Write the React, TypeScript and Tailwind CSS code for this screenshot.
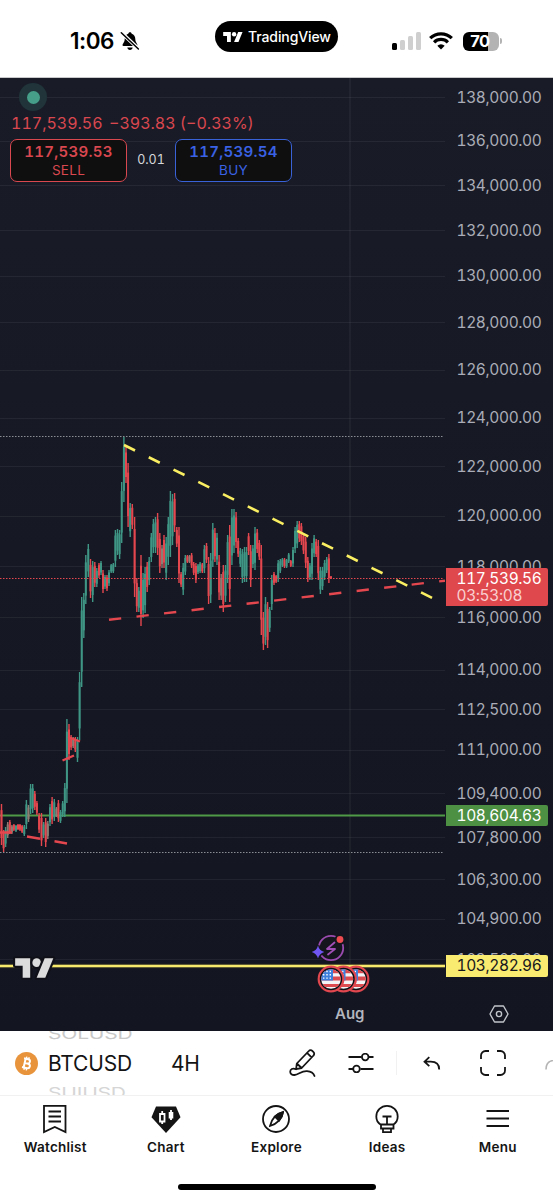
import type { ReactNode } from 'react';

const CHART_TOP = 78;
const GREEN = '#3f9685';
const RED = '#e5474f';

// log price scale
const priceToY = (price: number) => 97 - CHART_TOP + Math.log(138000 / price) * 2997;
const format = (n: number) => n.toLocaleString('en-US', { minimumFractionDigits: 2 });

const ticks = [
  138000, 136000, 134000, 132000, 130000, 128000, 126000, 124000, 122000, 120000, 118000, 116000,
  114000, 112500, 111000, 109400, 107800, 106300, 104900, 103500,
];

type Candle = [x: number, high: number, low: number, side: 'g' | 'r' | 'm'];

const candles: Candle[] = [
  [1.5, 804, 845, 'r'], [3.6, 830, 852, 'r'], [5.6, 827, 847, 'g'], [7.7, 822, 838, 'm'], [9.8, 820, 834, 'r'],
  [11.9, 825, 834, 'm'], [13.9, 824, 831, 'r'], [16, 825, 832, 'g'], [18, 824, 830, 'r'], [20, 824, 831, 'r'],
  [22.1, 825, 833, 'r'], [24.3, 825, 836, 'g'], [26.4, 800, 829, 'g'], [28.5, 805, 822, 'm'], [30.6, 784, 814, 'g'],
  [32.7, 784, 813, 'g'], [34.8, 791, 810, 'r'], [36.9, 801, 815, 'r'], [39.1, 813, 833, 'r'], [41.5, 813, 846, 'r'],
  [43.6, 822, 838, 'g'], [45.7, 818, 847, 'r'], [47.8, 821, 839, 'm'], [50, 804, 826, 'g'], [52.1, 797, 824, 'r'],
  [54.3, 799, 821, 'g'], [56.4, 807, 817, 'm'], [58.4, 800, 822, 'r'], [60.5, 810, 823, 'g'], [62.7, 801, 817, 'g'],
  [64.8, 783, 817, 'g'], [66.9, 719, 803, 'g'], [69, 724, 760, 'r'], [71.1, 735, 750, 'r'], [73.2, 737, 748, 'm'],
  [75.3, 737, 752, 'r'], [77.5, 737, 762, 'g'], [79.6, 672, 740, 'g'], [81.7, 597, 687, 'g'], [83.8, 593, 638, 'g'],
  [85.8, 555, 604, 'g'], [88.3, 544, 577, 'g'], [90.5, 559, 598, 'r'], [92.7, 561, 602, 'g'], [94.8, 562, 587, 'r'],
  [96.8, 568, 587, 'g'], [99, 563, 578, 'r'], [101, 561, 575, 'g'], [103, 570, 593, 'r'], [105, 575, 589, 'g'],
  [107, 575, 591, 'r'], [109, 570, 586, 'g'], [111.2, 564, 573, 'g'], [113.3, 563, 573, 'g'], [115.4, 530, 567, 'g'],
  [117.5, 529, 555, 'g'], [119.6, 530, 559, 'g'], [121.7, 482, 543, 'g'], [123.9, 437, 502, 'g'], [126, 447, 483, 'r'],
  [128.1, 463, 527, 'r'], [130.2, 503, 537, 'g'], [132.3, 504, 529, 'r'], [134.6, 517, 597, 'r'], [136.8, 578, 612, 'r'],
  [138.8, 587, 612, 'g'], [141, 555, 626, 'r'], [143.1, 573, 618, 'g'], [145.1, 567, 613, 'g'], [147.2, 562, 592, 'r'],
  [149.2, 557, 585, 'g'], [151.3, 533, 562, 'g'], [153.4, 519, 553, 'g'], [155.5, 517, 553, 'g'], [157.6, 513, 555, 'r'],
  [159.8, 533, 573, 'r'], [162, 545, 568, 'm'], [164, 535, 568, 'r'], [166.2, 537, 580, 'g'], [168.3, 517, 565, 'g'],
  [170.4, 491, 557, 'g'], [172.5, 494, 545, 'g'], [174.6, 493, 532, 'r'], [176.8, 527, 547, 'r'], [179, 527, 583, 'r'],
  [181.1, 572, 587, 'r'], [183.2, 563, 595, 'g'], [185.3, 555, 575, 'g'], [187.4, 555, 563, 'r'], [189.5, 555, 563, 'm'],
  [191.6, 553, 568, 'r'], [193.7, 562, 575, 'r'], [195.9, 563, 583, 'r'], [198, 564, 574, 'g'], [200.1, 562, 573, 'g'],
  [202.3, 563, 573, 'r'], [204.4, 545, 573, 'g'], [206.5, 543, 563, 'r'], [208.6, 557, 604, 'r'], [210.7, 553, 603, 'g'],
  [212.8, 523, 567, 'g'], [214.9, 528, 562, 'r'], [217, 533, 565, 'g'], [219.1, 555, 600, 'r'], [221.2, 574, 600, 'm'],
  [223.3, 565, 612, 'r'], [225.5, 565, 602, 'g'], [227.6, 535, 583, 'g'], [229.7, 525, 602, 'r'], [231.9, 509, 565, 'g'],
  [234, 509, 553, 'g'], [236.1, 512, 548, 'r'], [238.2, 538, 557, 'r'], [240.3, 548, 567, 'g'], [242.4, 549, 583, 'g'],
  [244.5, 547, 582, 'g'], [246.5, 547, 582, 'g'], [248.6, 533, 555, 'r'], [250.7, 545, 587, 'r'], [252.9, 545, 568, 'g'],
  [255, 527, 570, 'g'], [257.2, 529, 553, 'r'], [259.3, 540, 560, 'r'], [261.3, 545, 635, 'r'], [263.4, 612, 650, 'r'],
  [265.5, 597, 645, 'g'], [267.6, 602, 648, 'r'], [269.7, 607, 632, 'g'], [271.8, 575, 610, 'g'], [274, 572, 585, 'r'],
  [276.1, 575, 583, 'r'], [278.2, 560, 582, 'g'], [280.3, 559, 573, 'g'], [282.4, 558, 567, 'g'], [284.5, 558, 568, 'r'],
  [286.6, 559, 568, 'g'], [288.7, 553, 563, 'g'], [290.8, 560, 567, 'r'], [293, 547, 567, 'g'], [295.1, 527, 553, 'g'],
  [297.2, 521, 548, 'g'], [299.3, 521, 542, 'r'], [301.4, 523, 545, 'r'], [303.5, 533, 554, 'r'], [305.7, 537, 568, 'r'],
  [307.8, 557, 582, 'r'], [309.9, 563, 580, 'g'], [312, 543, 580, 'g'], [314.1, 535, 557, 'g'], [316.2, 539, 557, 'r'],
  [318.3, 540, 580, 'r'], [320.4, 567, 594, 'g'], [322.5, 567, 590, 'g'], [324.6, 560, 580, 'g'], [326.7, 557, 573, 'g'],
  [328.9, 554, 583, 'r'], [331, 576, 579, 'r'],
];

const candleColor = { g: GREEN, r: RED, m: '#8f7d74' };

function TvMark({ className, outline }: { className: string; outline?: boolean }) {
  return (
    <svg viewBox="-2 2 40 22" className={className} fill="currentColor">
      <g
        stroke={outline ? '#101118' : 'none'}
        strokeWidth={outline ? 4 : 0}
        paintOrder="stroke"
        strokeLinejoin="round"
      >
        <path d="M14 22H7V11H0V4h14v18z" />
        <circle cx="20" cy="8" r="4" />
        <path d="M28 22h-8l7.5-18h8L28 22z" />
      </g>
    </svg>
  );
}

function StatusBar() {
  return (
    <header className="flex h-[78px] shrink-0 items-start border-b border-[#c9c9cc] bg-white text-black">
      <div className="flex h-[82px] w-[215px] items-center pl-[70px]">
        <span className="w-[46px] text-[22.5px] font-semibold tracking-[-0.5px]">1:06</span>
        <svg viewBox="0 0 20 20" className="ml-[4px] h-5 w-5">
          <path d="M10 1.2c1 0 1.6.6 1.7 1.5 2.3.7 3.6 2.6 3.6 5.2 0 3.5 2.2 4.6 2.2 6.3 0 .5-.4.8-1 .8h-13c-.6 0-1-.3-1-.8 0-1.7 2.2-2.8 2.2-6.3 0-2.6 1.3-4.500 3.600-5.200C8.400 1.800 9 1.200 10 1.200zM7.300 16.600h5.400c-.2 1.400-1.300 2.300-2.700 2.300s-2.500-.9-2.700-2.300z" />
          <path d="M2.2 2.4 18.700 18" stroke="#fff" strokeWidth="3.6" />
          <path d="M1.3 1.8 18.400 18" stroke="#000" strokeWidth="1.5" strokeLinecap="round" />
        </svg>
      </div>
      <div className="mt-[21px] flex h-[31px] w-[123px] items-center rounded-full bg-black pl-[7px] text-white">
        <TvMark className="h-[12px] w-[22px]" />
        <span className="ml-[4px] text-[14px] font-medium tracking-[-0.1px]">TradingView</span>
      </div>
      <div className="ml-[54px] flex h-[82px] items-center">
        <div className="flex h-[18px] items-end gap-[3px]">
          <span className="h-[7px] w-[5px] rounded-[1.5px] bg-black" />
          <span className="h-[10px] w-[5px] rounded-[1.5px] bg-[#cfcfcf]" />
          <span className="h-[14px] w-[5px] rounded-[1.5px] bg-[#cfcfcf]" />
          <span className="h-[18px] w-[5px] rounded-[1.5px] bg-[#cfcfcf]" />
        </div>
        <svg viewBox="0 0 24 18" className="ml-[8px] h-[18px] w-6">
          <g fill="none" stroke="#000" strokeWidth="3.2">
            <path d="M1.2 6.2a15.400 15.400 0 0 1 21.600 0" />
            <path d="M5.1 10.300a9.800 9.800 0 0 1 13.800 0" />
          </g>
          <path d="M12 17.5 8.300 13.700a5.300 5.300 0 0 1 7.400 0z" />
        </svg>
        <div className="ml-[10px] flex h-[19px] w-[36px] items-center justify-center rounded-[6px] bg-linear-to-r from-black from-70% to-[#b3b3b3] to-70%">
          <span className="-translate-x-px text-[16.5px] leading-none font-bold tracking-[-0.5px] text-white">70</span>
        </div>
        <span className="ml-[1px] h-[6px] w-[2px] rounded-r-full bg-[#b3b3b3]" />
      </div>
    </header>
  );
}

function ChartCanvas() {
  return (
    <svg width="445" height="953" viewBox="0 0 445 953" className="block">
      <g stroke="#ffffff" strokeOpacity="0.06">
        {ticks.map((t) => (
          <path key={t} d={`M0 ${Math.round(priceToY(t)) + 0.5}H445`} />
        ))}
        <path d="M350 0V909" strokeOpacity="0.08" />
      </g>
      <g transform={`translate(0 ${-CHART_TOP})`} fill="none">
        <path d="M0 436.5H443M0 852.5H443" stroke="#8b8d95" strokeDasharray="1.5 1.5" />
        <path d="M0 815.5H445" stroke="#4f9a47" strokeWidth="2.2" />
        <path d="M0 966H445" stroke="#2b2a20" strokeWidth="4.5" />
        <path d="M0 966H445" stroke="#f7e96b" strokeWidth="2.4" />
        {candles.map(([x, high, low, side]) => {
          const range = low - high;
          return (
            <g key={x} stroke={candleColor[side]}>
              <path d={`M${x} ${high}V${low}`} strokeWidth="1.4" />
              <path d={`M${x} ${high + range * 0.15}V${low - range * 0.17}`} strokeWidth="2" />
            </g>
          );
        })}
        <path d="M0 578.5H443" stroke={RED} strokeDasharray="1.5 1.5" />
        <g stroke={RED} strokeWidth="2.4">
          <path d="M109 619.8 445 580.7" strokeDasharray="12.3 15.4" />
          <path d="M62.5 760.5 74 755.5M68 737l12 4.5" />
          <path d="M0 832.5h12M27 836.5l13 2.200M54.5 841.3l12.500 2.200" />
        </g>
        <path d="M124 445 433 598.3" stroke="#faee62" strokeWidth="2.6" strokeDasharray="12.3 15.33" />
      </g>
    </svg>
  );
}

function PriceTag({ y, className, children }: { y: number; className: string; children: ReactNode }) {
  return (
    <div
      className={`absolute left-[1px] w-[102px] rounded-r-[2px] pl-[10.5px] leading-none ${className}`}
      style={{ top: y }}
    >
      {children}
    </div>
  );
}

function PriceAxis() {
  return (
    <div className="relative h-full w-[108px] text-[15.5px] tracking-[-0.38px] text-[#aaadb7] tabular-nums">
      {ticks.map((t) => (
        <span
          key={t}
          className="absolute left-[11.5px] -translate-y-1/2 leading-none"
          style={{ top: priceToY(t) + 0.5 }}
        >
          {format(t)}
        </span>
      ))}
      <PriceTag y={490} className="flex h-[38px] flex-col justify-center gap-[2px] bg-[#df484c] text-white">
        <span>{format(117539.56)}</span>
        <span className="text-[#f9cfd0]">03:53:08</span>
      </PriceTag>
      <PriceTag y={727} className="flex h-[21px] items-center bg-[#4d8f43] text-white">
        {format(108604.63)}
      </PriceTag>
      <PriceTag y={877} className="flex h-[22px] items-center bg-[#f9ea70] text-[#15161c]">
        {format(103282.96)}
      </PriceTag>
      <svg
        viewBox="0 0 20 18"
        className="absolute top-[927px] left-[44px] h-[18px] w-5"
        fill="none"
        stroke="#c3c5cc"
        strokeWidth="1.4"
      >
        <path d="M5.5 1h9L19 9l-4.500 8h-9L1 9z" strokeLinejoin="round" />
        <circle cx="10" cy="9" r="2.6" />
      </svg>
    </div>
  );
}

function QuoteButton({ price, label, className }: { price: number; label: string; className: string }) {
  return (
    <button
      className={`flex h-[43px] w-[117px] flex-col items-center justify-center rounded-[7px] border-[1.5px] bg-[#0f0f0f] ${className}`}
    >
      <span className="text-[15px] leading-[18px] font-semibold tracking-[0.3px] tabular-nums">{format(price)}</span>
      <span className="text-[13.5px] leading-[18px] tracking-[0.3px]">{label}</span>
    </button>
  );
}

function Legend() {
  return (
    <div className="absolute top-0 left-0 flex flex-col">
      <div className="mt-[5px] ml-[19px] flex h-7 w-7 items-center justify-center rounded-full bg-[#20343a]">
        <span className="h-[13px] w-[13px] rounded-full bg-[#459f89]" />
      </div>
      <div className="mt-px ml-[11px] flex h-[22px] items-center gap-[8px] text-[16px] text-[#d9474f] tabular-nums">
        <span className="w-[90px]">117,539.56</span>
        <span>−393.83 (−0.33%)</span>
      </div>
      <div className="mt-[5px] ml-[10px] flex items-center">
        <QuoteButton price={117539.53} label="SELL" className="border-[#d9474f] text-[#d9474f]" />
        <span className="w-12 text-center text-[12.5px] text-[#d6d7db] tabular-nums">0.01</span>
        <QuoteButton price={117539.54} label="BUY" className="border-[#3a62d8] text-[#3a62e4]" />
      </div>
    </div>
  );
}

function Flag({ x }: { x: number }) {
  return (
    <g transform={`translate(${x} 15)`}>
      <circle r="12.3" fill="#101118" stroke="#e0474e" strokeWidth="2.2" />
      <g clipPath="url(#flagClip)">
        <path fill="#f4f4f6" d="M-10-10h20v20h-20z" />
        <path fill="#dc4b50" d="M-10-10h20v4.200h-20zM-10-2.500h20v4h-20zM-10 5h20v3h-20z" />
        <path fill="#3f7fdc" d="M-10-10H2V1.500h-12z" />
        <path stroke="#fff" strokeWidth="1.4" strokeDasharray="1.4 1.9" d="M-8-7.500H1M-8-4.200H1M-8-.9H1" />
      </g>
    </g>
  );
}

function EventMarkers() {
  return (
    <svg viewBox="0 0 62 62" className="absolute top-[855px] left-[310px] h-[62px] w-[62px]" fill="none">
      <circle cx="21" cy="15" r="14.5" fill="#14151d" />
      <circle cx="21" cy="15" r="12.2" stroke="#9a4bb0" strokeWidth="1.8" />
      <circle cx="30" cy="6.5" r="5.4" fill="#14151d" />
      <circle cx="30" cy="6.5" r="3.4" fill="#ee4b50" />
      <path
        d="m24.5 9.5-7.500 6.500h8l-7 5.500"
        stroke="#a04fb6"
        strokeWidth="1.8"
        strokeLinejoin="round"
        strokeLinecap="round"
      />
      <path
        d="M8 12.5q1.200 5 6.300 6.500-5.100 1.500-6.300 6.500-1.200-5-6.300-6.500 5.100-1.500 6.300-6.500z"
        fill="#6f55f2"
        stroke="#14151d"
        strokeWidth="3"
        paintOrder="stroke"
      />
      <clipPath id="flagClip">
        <circle r="9.8" />
      </clipPath>
      <g transform="translate(0 31)">
        <Flag x={46} />
        <Flag x={33.5} />
        <Flag x={21} />
      </g>
    </svg>
  );
}

function Toolbar() {
  return (
    <div className="relative flex h-[65px] shrink-0 items-center overflow-hidden border-b border-[#f1f1f1] bg-white text-[#141414]">
      <svg viewBox="0 0 24 24" className="ml-[15px] h-[23px] w-[23px]">
        <circle cx="12" cy="12" r="12" fill="#e8943c" />
        <g transform="rotate(13 12 12)" fill="none" stroke="#fff" strokeWidth="2.1">
          <path d="M8.3 7.300h4.500a2.200 2.200 0 0 1 0 4.500H9.800M9.800 11.800h3.800a2.400 2.400 0 0 1 0 4.900H8.300M10 7.300v9.400" />
          <path d="M10.8 5v2.300M13.300 5v2.300M10.800 16.700V19M13.300 16.700V19" strokeWidth="1.5" />
        </g>
      </svg>
      <div className="relative ml-[10px] w-[85px] text-[21px] leading-6 tracking-[-0.2px]">
        <span className="block translate-y-px">BTCUSD</span>
        <span className="absolute top-[-29px] left-0 scale-y-[0.7] text-[#c9c9c9]">SOLUSD</span>
        <span className="absolute top-[30px] left-0 scale-y-[0.7] text-[#d6d6d6]">SUIUSD</span>
      </div>
      <span className="ml-[38px] w-[30px] translate-y-px text-[21px] tracking-[-0.4px]">4H</span>
      <svg
        viewBox="0 0 28 30"
        className="ml-[88px] h-[30px] w-7"
        fill="none"
        stroke="#141414"
        strokeWidth="1.8"
        strokeLinecap="round"
        strokeLinejoin="round"
      >
        <path d="m7.800 15.500 12-12.500a2.400 2.400 0 0 1 3.500-.1l1.200 1.200a2.400 2.400 0 0 1 0 3.400L12.700 20l-5.600 1.200zM18 4.800l4.600 4.600M7.800 15.500l4.900 4.500" />
        <path d="M7 21.200c-3.500-1.500-5.800 0-5.800 2.500 0 2 1.800 3.500 4.300 3.300 4-.3 7-4.200 12.500-3.800 3.800.3 6.500 2 7.500 4.800" />
      </svg>
      <svg viewBox="0 0 26 20" className="ml-[31px] h-5 w-[26px]" fill="none" stroke="#141414" strokeWidth="1.8">
        <path d="M.5 4h13M21 4h4.500M.5 16H5M12.500 16h13" />
        <circle cx="17.2" cy="4" r="3.3" />
        <circle cx="8.5" cy="16" r="3.3" />
      </svg>
      <span className="ml-[22px] h-6 w-px bg-[#f1f1f1]" />
      <svg viewBox="0 0 18 14" className="ml-[26px] h-[14px] w-[18px]" fill="none" stroke="#141414" strokeWidth="1.8">
        <path d="M6.300 1.200 1.500 5.700l4.800 4.500M1.500 5.700h6.300c5 0 8.400 2.300 8.400 7.800" />
      </svg>
      <svg viewBox="0 0 26 26" className="ml-[39px] h-[26px] w-[26px]" fill="none" stroke="#141414" strokeWidth="1.8">
        <path d="M1 9V5.500A4.500 4.500 0 0 1 5.500 1H9M17 1h3.500A4.500 4.500 0 0 1 25 5.500V9M25 17v3.500a4.500 4.500 0 0 1-4.500 4.500H17M9 25H5.500A4.500 4.500 0 0 1 1 20.500V17" />
      </svg>
      <svg
        viewBox="0 0 8 10"
        className="absolute top-[29px] right-0 h-[10px] w-2"
        fill="none"
        stroke="#b5b5b5"
        strokeWidth="1.6"
      >
        <path d="M1 9.500C1 4 4 1 8 .5" />
      </svg>
    </div>
  );
}

const navItems: { label: string; icon: ReactNode }[] = [
  {
    label: 'Watchlist',
    icon: <path d="M4 1.800h21.500v26.200L14.800 23 4 28zM8.500 7.500h12.500M8.500 12.500h12.500M8.500 17.500h12.500" />,
  },
  {
    label: 'Chart',
    icon: (
      <>
        <path d="M5 2.500h20l4.500 10.700L15 29 .5 13.200z" fill="#141414" stroke="none" />
        <path d="M11.200 7v3M11.200 17v3M9 10h4.500v7.500H9zM20 6v10" stroke="#fff" />
        <path d="M17.700 8h4.600v6.500h-4.600z" fill="#fff" stroke="none" />
      </>
    ),
  },
  {
    label: 'Explore',
    icon: (
      <>
        <circle cx="15" cy="15" r="13" />
        <path d="M22 8c-.5 3.500-1.800 6.300-4 8.700-2.300 2.400-5 4.300-9 5.300.8-4 2.500-7 4.800-9.400C16 10.400 18.700 8.800 22 8z" />
        <path d="M22 8c-.5 3.500-1.800 6.300-4 8.700l-4.200-4.100C16 10.400 18.700 8.800 22 8z" fill="#141414" />
      </>
    ),
  },
  {
    label: 'Ideas',
    icon: (
      <path d="M8.500 20.500C5.500 18.500 4.300 16 4.300 12.500a10.700 10.700 0 0 1 21.400 0c0 3.500-1.200 6-4.200 8zM10.500 12.500h9M15 12.500v8M9 20.500v4h12.500v-4M11 24.500v3.700h8v-3.700" />
    ),
  },
  {
    label: 'Menu',
    icon: <path d="M3.500 7h22.500M3.500 14.500h22.500M3.500 22h22.500" />,
  },
];

function BottomNav() {
  return (
    <nav className="grid h-[86px] shrink-0 grid-cols-5 bg-white text-[#141414]">
      {navItems.map(({ label, icon }) => (
        <div key={label} className="flex flex-col items-center pt-[8px]">
          <svg viewBox="0 0 30 30" className="h-[30px] w-[30px]" fill="none" stroke="#141414" strokeWidth="1.8">
            {icon}
          </svg>
          <span className="mt-[3px] text-[13.5px] leading-5 font-semibold tracking-[0.25px]">{label}</span>
        </div>
      ))}
    </nav>
  );
}

export default function App() {
  return (
    <div className="flex h-[1200px] w-[553px] flex-col overflow-hidden bg-white font-['Inter',sans-serif]">
      <StatusBar />
      <main className="relative flex h-[953px] shrink-0 bg-linear-to-b from-[#191c27] to-[#131520]">
        <ChartCanvas />
        <PriceAxis />
        <Legend />
        <TvMark className="absolute top-[878px] left-[13px] h-[24px] w-[43px] text-[#dcdcdc]" outline />
        <EventMarkers />
        <span className="absolute top-[926px] left-[335px] text-[15px] leading-5 font-semibold text-[#b3b5be]">
          Aug
        </span>
      </main>
      <Toolbar />
      <BottomNav />
      <div className="mx-auto mt-[2px] h-[6px] w-[198px] rounded-full bg-black" />
    </div>
  );
}
